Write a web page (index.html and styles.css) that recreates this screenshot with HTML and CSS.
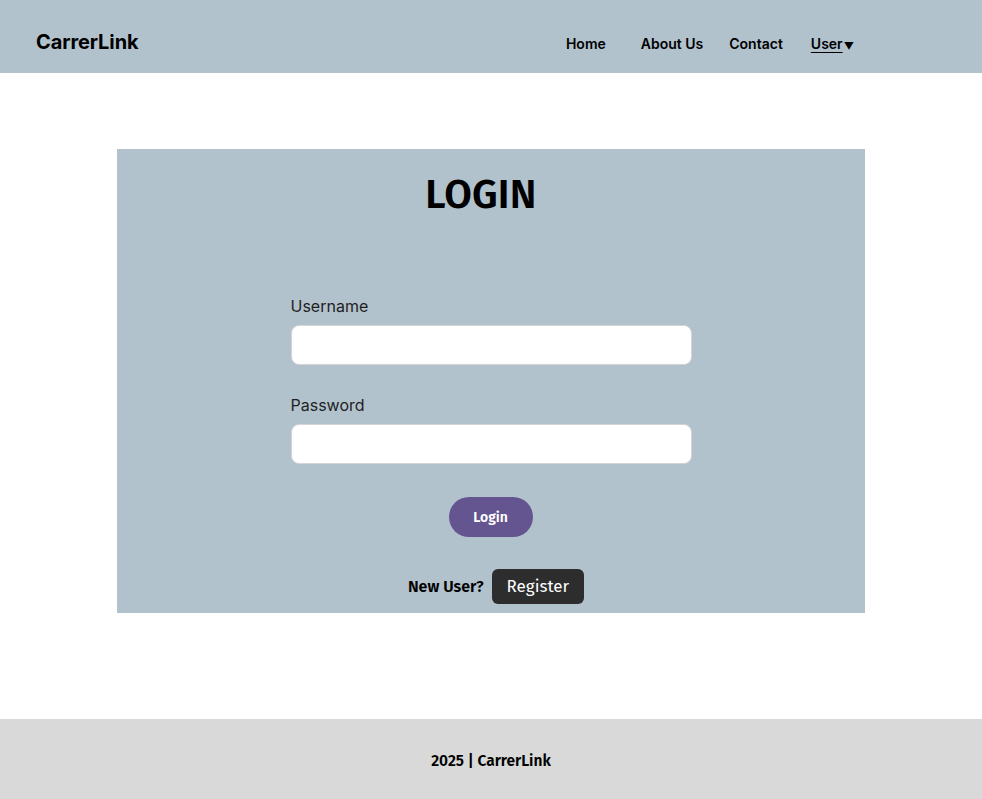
FILE: index.html
```html
<!DOCTYPE html>
<html>
<head>
<meta charset="utf-8">
<link rel="stylesheet" href="styles.css">
</head>
<body>
<header class="topbar">
  <div class="logo">CarrerLink</div>
  <nav class="nav">
    <a class="nav-link" href="#">Home</a>
    <a class="nav-link" href="#">About Us</a>
    <a class="nav-link" href="#">Contact</a>
    <a class="nav-link user" href="#"><span class="user-text">User</span><span class="caret">▼</span></a>
  </nav>
</header>
<main class="main">
  <section class="card">
    <h1 class="title">LOGIN</h1>
    <form class="form">
      <label class="label">Username</label>
      <input class="input" type="text">
      <label class="label pw">Password</label>
      <input class="input" type="password">
      <div class="btn-row"><button class="login-btn" type="button">Login</button></div>
    </form>
    <div class="register-row">
      <span class="new-user">New User?</span>
      <button class="register-btn" type="button">Register</button>
    </div>
  </section>
</main>
<footer class="footer">2025 | CarrerLink</footer>
</body>
</html>
```
FILE: styles.css
```css
* { box-sizing: border-box; }
html, body { margin: 0; padding: 0; }
body {
  font-family: Inter, "Noto Sans", sans-serif;
  background: #fff;
  color: #000;
  width: 982px;
  min-height: 799px;
  display: flex;
  flex-direction: column;
}
.topbar {
  height: 73px;
  background: #b1c2cd;
  display: flex;
  align-items: center;
  padding: 14px 36px 0;
}
.logo {
  font-family: Inter, sans-serif;
  font-weight: 700;
  font-size: 20px;
  letter-spacing: -0.1px;
  flex: 1;
  margin-top: -4px;
}
.nav {
  display: flex;
  align-items: center;
  margin-right: 92px;
}
.nav-link {
  color: #000;
  text-decoration: none;
  font-weight: 600;
  font-size: 14px;
  margin-left: 26px;
}
.nav-link:first-child { margin-left: 0; margin-right: 9px; }
.nav-link.user { margin-left: 28px; }
.user-text { text-decoration: underline; text-underline-offset: 3px; }
.caret { font-size: 10px; margin-left: 1px; position: relative; top: 1px; }
.main {
  flex: 1;
  padding: 76px 0 106px;
  display: flex;
  justify-content: center;
}
.card {
  width: 748px;
  height: 464px;
  background: #b1c2cd;
  display: flex;
  flex-direction: column;
  align-items: center;
}
.title {
  font-family: "Fira Sans", sans-serif;
  font-weight: 600;
  font-size: 40px;
  margin: 22px 0 0;
  padding-right: 20px;
  letter-spacing: 0.2px;
  line-height: 1.2;
}
.form {
  width: 401px;
  margin-top: 77px;
  display: flex;
  flex-direction: column;
}
.label {
  font-size: 16px;
  color: #1f1f1f;
  margin-bottom: 9px;
}
.label.pw { margin-top: 30px; }
.input {
  height: 40px;
  border: 1px solid #d4d4d4;
  border-radius: 8px;
  background: #fff;
  font-size: 16px;
}
.btn-row { display: flex; justify-content: center; margin-top: 33px; }
.login-btn {
  width: 84px;
  height: 40px;
  border: none;
  border-radius: 20px;
  background: #645590;
  color: #fff;
  font-family: "Fira Sans", sans-serif;
  font-weight: 600;
  font-size: 14px;
  margin-left: -1px;
}
.register-row {
  display: flex;
  align-items: center;
  margin-top: 32px;
  margin-left: 10px;
}
.new-user {
  font-family: "Fira Sans", sans-serif;
  font-weight: 600;
  font-size: 16px;
  margin-right: 8px;
}
.register-btn {
  height: 35px;
  padding: 0 15px;
  border: none;
  border-radius: 6px;
  background: #2d2d2d;
  color: #fff;
  font-family: "Fira Sans", sans-serif;
  font-size: 17px;
}
.footer {
  height: 80px;
  background: #d9d9d9;
  display: flex;
  align-items: center;
  justify-content: center;
  padding-top: 3px;
  font-family: "Fira Sans", sans-serif;
  font-weight: 600;
  font-size: 15.5px;
}
```
